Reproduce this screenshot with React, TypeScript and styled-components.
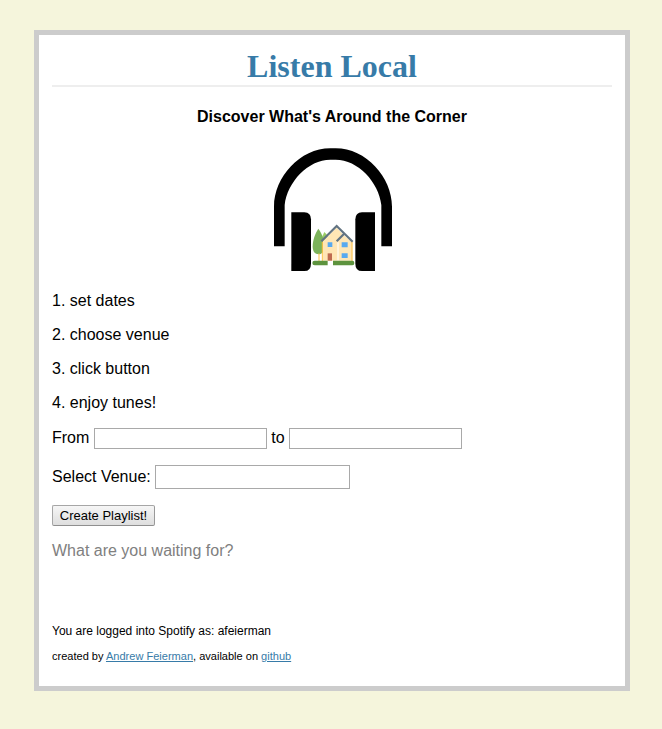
import React from 'react';
import styled, { createGlobalStyle } from 'styled-components';

const GlobalStyle = createGlobalStyle`
  * { box-sizing: border-box; }
  body {
    margin: 0;
    background: #f5f5dc;
    color: #000;
    font: 16px/18px "Liberation Sans", Arial, sans-serif;
  }
`;

const Panel = styled.main`
  display: flex;
  flex-direction: column;
  width: 596px;
  height: 661px;
  margin: 30px 0 38px 34px;
  padding: 13px;
  border: 5px solid #ccc;
  background: #fff;
`;

const Title = styled.h1`
  margin: 0;
  height: 39px;
  border-bottom: 2px solid #eee;
  color: #377ba8;
  font: bold 32px/37px "Liberation Serif", "Times New Roman", serif;
  text-align: center;
`;

const Tagline = styled.h4`
  margin: 21px 0 0;
  font-size: 16px;
  text-align: center;
`;

const Logo = styled.svg`
  display: block;
  width: 140px;
  height: 140px;
  margin: 14px auto 0;
`;

const Steps = styled.ol`
  display: flex;
  flex-direction: column;
  gap: 16px;
  margin: 12px 0 0;
  padding: 0;
  list-style: none;
`;

const Field = styled.div<{ $lineHeight: number }>`
  display: flex;
  align-items: flex-start;
  gap: 4.45px;
  margin-top: 16px;
  line-height: ${(p) => p.$lineHeight}px;
`;

const TextBox = styled.input<{ $w: number; $h: number }>`
  width: ${(p) => p.$w}px;
  height: ${(p) => p.$h}px;
  padding: 1px;
  border: 1px solid #a9a9a9;
  border-radius: 0;
  background: #fff;
  outline: none;
`;

const Button = styled.button`
  align-self: flex-start;
  width: 103px;
  height: 21px;
  margin-top: 16px;
  padding: 0;
  border: 1px solid #999;
  border-color: #a6a6a6 #999 #8f8f8f #a6a6a6;
  border-radius: 2px;
  background: linear-gradient(#f6f6f6, #dedede);
  color: #000;
  font: 13px/15px "Liberation Sans", Arial, sans-serif;
  white-space: nowrap;
`;

const Status = styled.p`
  margin: 16px 0 0;
  color: #808080;
`;

const Account = styled.p`
  margin: 64px 0 0;
  font-size: 12px;
  line-height: 14px;
`;

const Credits = styled.p`
  margin: 12px 0 0;
  font-size: 11.04px;
  line-height: 13px;
`;

const Link = styled.a`
  color: #377ba8;
  text-decoration: underline;
`;

const steps = ['set dates', 'choose venue', 'click button', 'enjoy tunes!'];

function HeadphonesLogo() {
  return (
    <Logo viewBox="0 0 420 420" role="img" aria-label="Headphones around a house">
      <path d="M36 319V200C36 112 114 25 205 25H221C312 25 390 112 390 200V319H358V195C350 126 288 59 221 59H205C138 59 76 126 68 195V319Z" />
      <path d="M88 217H127Q147 218 147 238V371Q147 393 127 393H88Z" />
      <path d="M339 217H300Q280 218 280 238V371Q280 393 300 393H339Z" />
      <path d="M187 276C197 285 204 299 203 320L180 338V292Z" fill="#9ccc65" />
      <path d="M169 266C181 282 188 302 187 321C186 336 179 343 170 343C158 343 152 334 152 319C152 302 159 281 169 266Z" fill="#7cb35b" />
      <path d="M171 340V365M181 305V365" stroke="#ffc243" strokeWidth="3" />
      <path d="M183 303L224 263L247 287L271 307V362H183Z" fill="#ffe6b5" />
      <path d="M228 307V362" stroke="#fff6e2" strokeWidth="5" />
      <path d="M270 304V363" stroke="#fbbf45" strokeWidth="3" />
      <path d="M178 304L224 258L272 305M224 304L248 280" fill="none" stroke="#637482" strokeWidth="6.5" />
      <path d="M197 307h14v14h-14zM239 307h18v15h-18zM239 340h18v14h-18z" fill="#58a9ef" />
      <path d="M197 340h13v22h-13z" fill="#bf6b50" />
      <path d="M158 362H197V376H158Q151 376 151 369T158 362ZM213 362H271Q277 362 277 369T271 376H213Z" fill="#5d933e" />
    </Logo>
  );
}

export default function App() {
  return (
    <>
      <GlobalStyle />
      <Panel>
        <Title>Listen Local</Title>
        <Tagline>Discover What's Around the Corner</Tagline>
        <HeadphonesLogo />
        <Steps>
          {steps.map((step, i) => (
            <li key={step}>{i + 1}. {step}</li>
          ))}
        </Steps>
        <Field $lineHeight={20}>
          <label htmlFor="from">From</label>
          <TextBox id="from" $w={173} $h={21} />
          <label htmlFor="to">to</label>
          <TextBox id="to" $w={173} $h={21} />
        </Field>
        <Field $lineHeight={24}>
          <label htmlFor="venue">Select Venue:</label>
          <TextBox id="venue" $w={195} $h={24} />
        </Field>
        <Button type="button">Create Playlist!</Button>
        <Status>What are you waiting for?</Status>
        <Account>You are logged into Spotify as: afeierman</Account>
        <Credits>
          created by <Link href="#">Andrew Feierman</Link>, available on <Link href="#">github</Link>
        </Credits>
      </Panel>
    </>
  );
}
